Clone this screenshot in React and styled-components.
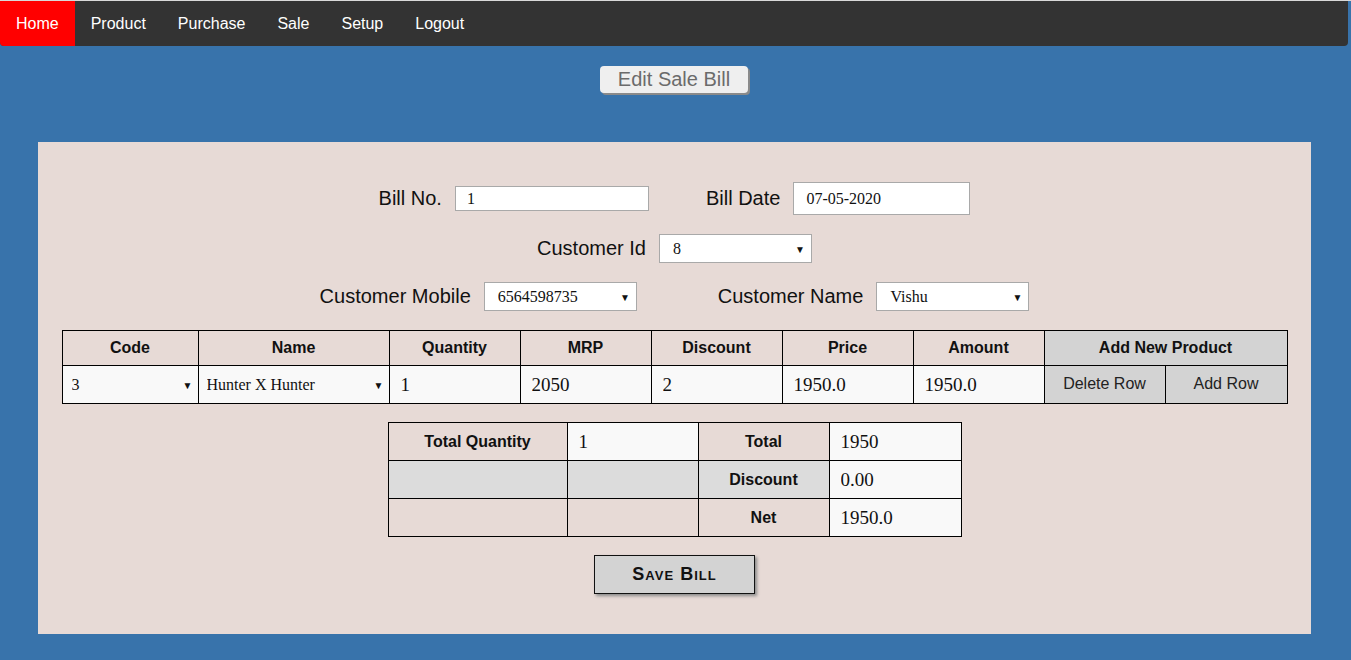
import React from 'react'
import styled, { createGlobalStyle } from 'styled-components'

const Global = createGlobalStyle`
  html, body {
    margin: 0;
    padding: 0;
    background-color: #3873ab;
    font-family: "Liberation Sans", Arial, sans-serif;
  }
  body {
    border-top: 1px solid #d9d9d9;
  }
`;

const Page = styled.div`
  display: flex;
  flex-direction: column;
  align-items: stretch;
  padding-right: 3px;
  height: 657px;
`;

const Nav = styled.ul`
  display: flex;
  margin: 0;
  padding: 0;
  list-style: none;
  background-color: #333333;
  border-radius: 0 0 4px 4px;
  overflow: hidden;
`;

const NavItem = styled.li`
  padding: 14px 16px;
  font-size: 16px;
  line-height: 17px;
  color: #ffffff;
  background-color: ${(p) => (p.active ? '#ff0000' : 'transparent')};
`;

const TitleRow = styled.div`
  display: flex;
  justify-content: center;
  padding: 20px 0 49px 0;
`;

const TitleButton = styled.button`
  width: 148px;
  height: 27px;
  padding: 0;
  border: none;
  border-radius: 4px;
  background-color: #efefef;
  box-shadow: 2px 2px 0 #8a8a8a;
  color: #6b6b6b;
  font-family: "Liberation Sans", Arial, sans-serif;
  font-size: 20px;
  line-height: 27px;
`;

const Panel = styled.div`
  margin: 0 37px 0 38px;
  padding: 40px 24px;
  background-color: #e7dad6;
  display: flex;
  flex-direction: column;
  align-items: center;
`;

const Fields = styled.div`
  display: flex;
  flex-direction: column;
  align-items: center;
  gap: 19px;
  margin-bottom: 19px;
`;

const FieldRow = styled.div`
  display: flex;
  align-items: center;
  gap: ${(p) => p.gap}px;
  height: ${(p) => p.h}px;
`;

const Group = styled.div`
  display: flex;
  align-items: center;
  gap: 13px;
`;

const Label = styled.span`
  font-size: 20px;
  color: #111111;
`;

const TextInput = styled.input`
  box-sizing: border-box;
  width: ${(p) => p.w}px;
  height: ${(p) => p.h}px;
  margin: 0;
  padding: 0 0 0 ${(p) => p.pad}px;
  border: 1px solid #a9a9a9;
  background: #ffffff;
  font-family: "Liberation Serif", "Times New Roman", serif;
  font-size: 16px;
  color: #111111;
`;

const SelectWrap = styled.div`
  position: relative;
  width: ${(p) => p.w}px;
  height: ${(p) => p.h}px;

  &::after {
    content: '▼';
    position: absolute;
    right: ${(p) => p.arrow || 7}px;
    top: 50%;
    transform: translateY(-50%);
    font-size: 10px;
    color: #111111;
    pointer-events: none;
  }
`;

const Select = styled.select`
  box-sizing: border-box;
  width: 100%;
  height: 100%;
  margin: 0;
  padding: 0 0 0 ${(p) => p.pad || 13}px;
  appearance: none;
  -webkit-appearance: none;
  border: ${(p) => (p.bare ? 'none' : '1px solid #a9a9a9')};
  border-radius: 0;
  background: ${(p) => (p.bare ? 'transparent' : '#ffffff')};
  font-family: "Liberation Serif", "Times New Roman", serif;
  font-size: 16px;
  color: #111111;
  outline: none;
`;

const Table = styled.table`
  border-collapse: collapse;
  table-layout: fixed;
  width: ${(p) => p.w}px;
`;

const Th = styled.th`
  height: ${(p) => p.h || 34}px;
  padding: 0;
  border: 1px solid #000000;
  background-color: ${(p) => p.bg || 'transparent'};
  font-family: "Liberation Sans", Arial, sans-serif;
  font-size: 16px;
  font-weight: bold;
  color: #111111;
  text-align: center;
`;

const Td = styled.td`
  height: ${(p) => p.h || 37}px;
  padding: 0;
  border: 1px solid #000000;
  background-color: ${(p) => p.bg || '#f9f9f9'};
`;

const CellInput = styled.input`
  box-sizing: border-box;
  width: 100%;
  height: 100%;
  margin: 0;
  padding: 0 0 0 11px;
  border: none;
  background: transparent;
  font-family: "Liberation Serif", "Times New Roman", serif;
  font-size: 19px;
  color: #111111;
  outline: none;
`;

const RowButton = styled.button`
  width: 100%;
  height: 100%;
  margin: 0;
  padding: 0 0 2px 0;
  border: none;
  background-color: #d3d3d3;
  font-family: "Liberation Sans", Arial, sans-serif;
  font-size: 16px;
  color: #222222;
`;

const Summary = styled.div`
  margin-top: 18px;
`;

const SaveButton = styled.button`
  margin-top: 18px;
  width: 161px;
  height: 39px;
  border: 1px solid #111111;
  background-color: #d3d3d3;
  box-shadow: 2px 2px 3px #8a8a8a;
  font-family: "Liberation Sans", Arial, sans-serif;
  font-size: 18px;
  font-weight: bold;
  font-variant: small-caps;
  letter-spacing: 1px;
  color: #111111;
`;

const menu = ['Home', 'Product', 'Purchase', 'Sale', 'Setup', 'Logout']

const columns = [
  { title: 'Code', w: 136 },
  { title: 'Name', w: 191 },
  { title: 'Quantity', w: 131 },
  { title: 'MRP', w: 131 },
  { title: 'Discount', w: 131 },
  { title: 'Price', w: 131 },
  { title: 'Amount', w: 131 },
]

const App = () => {
  return (
    <Page>
      <Global />
      <Nav>
        {menu.map((m, i) => (
          <NavItem key={m} active={i === 0}>{m}</NavItem>
        ))}
      </Nav>

      <TitleRow>
        <TitleButton>Edit Sale Bill</TitleButton>
      </TitleRow>

      <Panel>
        <Fields>
          <FieldRow gap={57} h={33}>
            <Group>
              <Label>Bill No.</Label>
              <TextInput w={194} h={25} pad={11} defaultValue="1" />
            </Group>
            <Group>
              <Label>Bill Date</Label>
              <TextInput w={177} h={33} pad={12} defaultValue="07-05-2020" />
            </Group>
          </FieldRow>
          <FieldRow gap={0} h={29}>
            <Group>
              <Label>Customer Id</Label>
              <SelectWrap w={153} h={29}>
                <Select defaultValue="8"><option>8</option></Select>
              </SelectWrap>
            </Group>
          </FieldRow>
          <FieldRow gap={81} h={29}>
            <Group>
              <Label>Customer Mobile</Label>
              <SelectWrap w={153} h={29}>
                <Select defaultValue="6564598735"><option>6564598735</option></Select>
              </SelectWrap>
            </Group>
            <Group>
              <Label>Customer Name</Label>
              <SelectWrap w={153} h={29}>
                <Select defaultValue="Vishu"><option>Vishu</option></Select>
              </SelectWrap>
            </Group>
          </FieldRow>
        </Fields>

        <Table w={1225}>
          <colgroup>
            {columns.map((c) => <col key={c.title} style={{ width: c.w }} />)}
            <col style={{ width: 121 }} />
            <col style={{ width: 122 }} />
          </colgroup>
          <thead>
            <tr>
              {columns.map((c) => <Th key={c.title}>{c.title}</Th>)}
              <Th colSpan={2} bg="#d3d3d3">Add New Product</Th>
            </tr>
          </thead>
          <tbody>
            <tr>
              <Td>
                <SelectWrap w={135} h={37} arrow={5}>
                  <Select bare pad={9} defaultValue="3"><option>3</option></Select>
                </SelectWrap>
              </Td>
              <Td>
                <SelectWrap w={190} h={37} arrow={5}>
                  <Select bare pad={8} defaultValue="Hunter X Hunter"><option>Hunter X Hunter</option></Select>
                </SelectWrap>
              </Td>
              <Td><CellInput defaultValue="1" /></Td>
              <Td><CellInput defaultValue="2050" /></Td>
              <Td><CellInput defaultValue="2" /></Td>
              <Td><CellInput defaultValue="1950.0" /></Td>
              <Td><CellInput defaultValue="1950.0" /></Td>
              <Td bg="#d3d3d3"><RowButton>Delete Row</RowButton></Td>
              <Td bg="#d3d3d3"><RowButton>Add Row</RowButton></Td>
            </tr>
          </tbody>
        </Table>

        <Summary>
          <Table w={573}>
            <colgroup>
              <col style={{ width: 179 }} />
              <col style={{ width: 131 }} />
              <col style={{ width: 131 }} />
              <col style={{ width: 132 }} />
            </colgroup>
            <tbody>
              <tr>
                <Th h={37}>Total Quantity</Th>
                <Td h={37}><CellInput defaultValue="1" /></Td>
                <Th h={37}>Total</Th>
                <Td h={37}><CellInput defaultValue="1950" /></Td>
              </tr>
              <tr>
                <Td h={37} bg="#dcdcdc" />
                <Td h={37} bg="#dcdcdc" />
                <Th h={37} bg="#dcdcdc">Discount</Th>
                <Td h={37}><CellInput defaultValue="0.00" /></Td>
              </tr>
              <tr>
                <Td h={37} bg="transparent" />
                <Td h={37} bg="transparent" />
                <Th h={37}>Net</Th>
                <Td h={37}><CellInput defaultValue="1950.0" /></Td>
              </tr>
            </tbody>
          </Table>
        </Summary>

        <SaveButton>Save Bill</SaveButton>
      </Panel>
    </Page>
  )
}

export default App
